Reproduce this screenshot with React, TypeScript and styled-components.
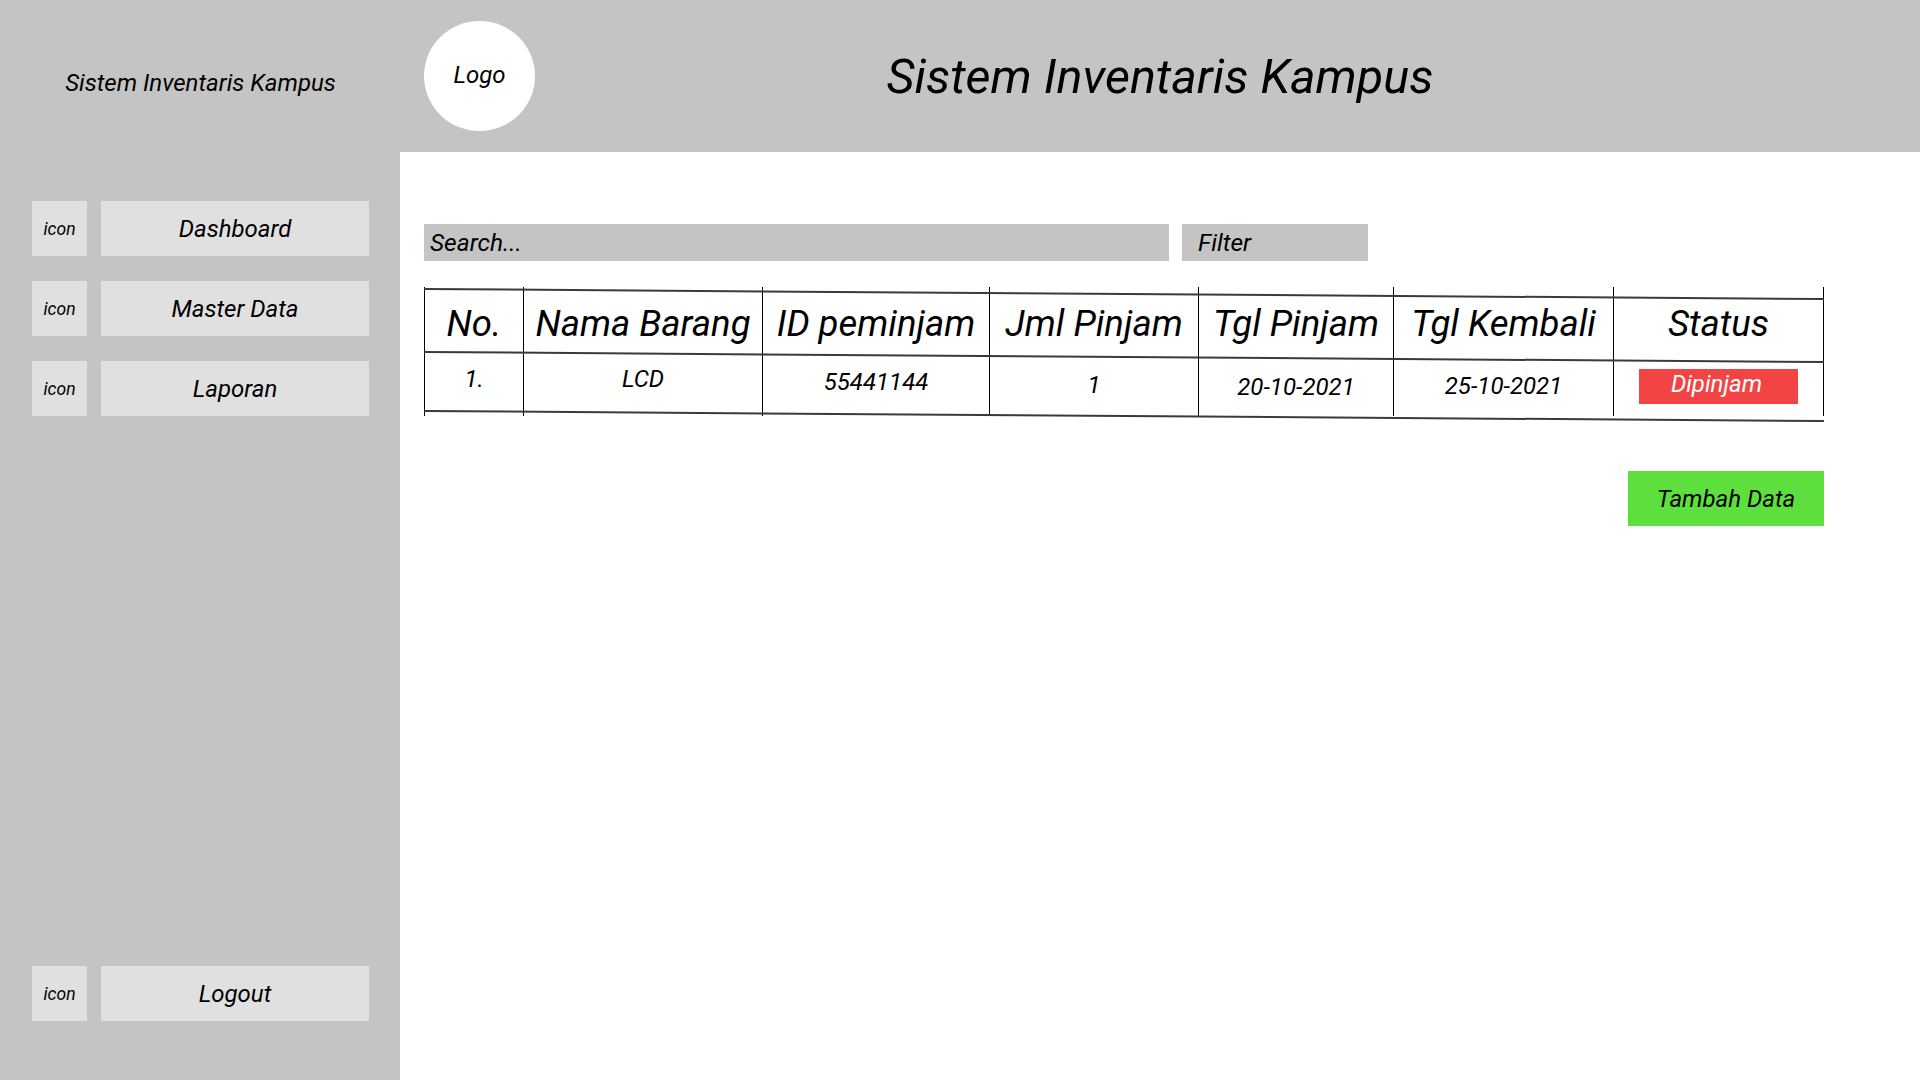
import React from "react";
import styled, { createGlobalStyle } from "styled-components";

const GlobalStyle = createGlobalStyle`
  html, body { margin: 0; padding: 0; }
  body {
    font-family: Roboto, "Liberation Sans", Arial, sans-serif;
    color: #000;
    background: #fff;
  }
  * { box-sizing: border-box; }
`;

const Page = styled.div`
  width: 1920px;
  height: 1080px;
  display: grid;
  grid-template-columns: 400px 1fr;
  grid-template-rows: 152px 1fr;
  overflow: hidden;
`;

const Sidebar = styled.aside`
  grid-row: 1 / span 2;
  grid-column: 1;
  background: #c4c4c4;
  display: flex;
  flex-direction: column;
  padding: 0 31px 59px 32px;
`;

const SideTitle = styled.div`
  height: 152px;
  display: flex;
  align-items: center;
  justify-content: center;
  padding-top: 14px;
  font-size: 24px;
  font-style: italic;
`;

const Nav = styled.nav`
  display: flex;
  flex-direction: column;
  gap: 25px;
  margin-top: 49px;
`;

const Spacer = styled.div`
  flex: 1;
`;

const NavRow = styled.div`
  display: flex;
  gap: 14px;
  height: 55px;
`;

const IconBox = styled.div`
  width: 55px;
  height: 55px;
  background: #e0e0e0;
  display: flex;
  align-items: center;
  justify-content: center;
  font-size: 17.5px;
  font-style: italic;
`;

const NavLabel = styled.div`
  flex: 1;
  background: #e0e0e0;
  display: flex;
  align-items: center;
  justify-content: center;
  font-size: 24px;
  font-style: italic;
`;

const Header = styled.header`
  grid-row: 1;
  grid-column: 2;
  background: #c4c4c4;
  display: grid;
  grid-template-columns: 1fr auto 1fr;
  align-items: center;
  padding: 0 24px;
`;

const Logo = styled.div`
  justify-self: start;
  width: 111px;
  height: 110px;
  border-radius: 50%;
  background: #fff;
  display: flex;
  align-items: center;
  justify-content: center;
  padding-bottom: 2px;
  font-size: 24px;
  font-style: italic;
`;

const Title = styled.h1`
  margin: 0;
  font-weight: 400;
  font-style: italic;
  font-size: 48.5px;
`;

const Main = styled.main`
  grid-row: 2;
  grid-column: 2;
  background: #fff;
  padding: 72px 0 0 24px;
`;

const Toolbar = styled.div`
  display: flex;
  gap: 13px;
`;

const Field = styled.div<{ $w: number; $pad: number }>`
  width: ${(p) => p.$w}px;
  height: 37px;
  background: #c4c4c4;
  display: flex;
  align-items: center;
  padding-left: ${(p) => p.$pad}px;
  font-size: 24.5px;
  font-style: italic;
`;

const TableWrap = styled.div`
  position: relative;
  margin-top: 26px;
  width: 1400px;
  display: grid;
  grid-template-columns: 99px 239px 227px 209px 195px 220px 211px;
  grid-template-rows: 64px 65px;
`;

const HeadCell = styled.div<{ $last?: boolean }>`
  border-left: 1px solid #000;
  border-right: ${(p) => (p.$last ? "1px solid #000" : "none")};
  display: flex;
  align-items: center;
  justify-content: center;
  padding-top: 8px;
  font-size: 36.5px;
  font-style: italic;
  white-space: nowrap;
`;

const DataCell = styled.div<{ $last?: boolean; $drop: number }>`
  border-left: 1px solid #000;
  border-right: ${(p) => (p.$last ? "1px solid #000" : "none")};
  display: flex;
  align-items: center;
  justify-content: center;
  padding-bottom: 10px;
  padding-top: ${(p) => p.$drop * 2}px;
  font-size: 24px;
  font-style: italic;
`;

const Rule = styled.div<{ $top: number }>`
  position: absolute;
  left: 0;
  top: ${(p) => p.$top}px;
  width: 1400px;
  height: 2px;
  background: #3a3a3a;
  transform-origin: 0 0;
  transform: rotate(0.41deg);
`;

const Badge = styled.div`
  width: 159px;
  height: 35px;
  background: #f24444;
  color: #fff;
  display: flex;
  align-items: flex-start;
  justify-content: center;
  padding-top: 1px;
  padding-right: 4px;
  font-size: 24px;
  font-style: italic;
`;

const Actions = styled.div`
  width: 1400px;
  display: flex;
  justify-content: flex-end;
  margin-top: 55px;
`;

const AddButton = styled.button`
  width: 196px;
  height: 55px;
  border: none;
  background: #5ddf3e;
  font-family: inherit;
  font-size: 24px;
  font-style: italic;
  color: #000;
  padding: 0;
`;

const headers = [
  "No.",
  "Nama Barang",
  "ID peminjam",
  "Jml Pinjam",
  "Tgl Pinjam",
  "Tgl Kembali",
  "Status",
];

const row = ["1.", "LCD", "55441144", "1", "20-10-2021", "25-10-2021"];
const drops = [0, 0, 3.5, 6, 8.5, 7.5, 7.5];

const navItems = ["Dashboard", "Master Data", "Laporan"];

export default function App() {
  return (
    <>
      <GlobalStyle />
      <Page>
        <Sidebar>
          <SideTitle>Sistem Inventaris Kampus</SideTitle>
          <Nav>
            {navItems.map((n) => (
              <NavRow key={n}>
                <IconBox>icon</IconBox>
                <NavLabel>{n}</NavLabel>
              </NavRow>
            ))}
          </Nav>
          <Spacer />
          <NavRow>
            <IconBox>icon</IconBox>
            <NavLabel>Logout</NavLabel>
          </NavRow>
        </Sidebar>
        <Header>
          <Logo>Logo</Logo>
          <Title>Sistem Inventaris Kampus</Title>
          <div />
        </Header>
        <Main>
          <Toolbar>
            <Field $w={745} $pad={6}>
              Search...
            </Field>
            <Field $w={186} $pad={16}>
              Filter
            </Field>
          </Toolbar>
          <TableWrap>
            {headers.map((h, i) => (
              <HeadCell key={h} $last={i === headers.length - 1}>
                {h}
              </HeadCell>
            ))}
            {row.map((c, i) => (
              <DataCell key={i} $drop={drops[i]}>
                {c}
              </DataCell>
            ))}
            <DataCell $last $drop={drops[6]}>
              <Badge>Dipinjam</Badge>
            </DataCell>
            <Rule $top={1} />
            <Rule $top={64} />
            <Rule $top={123} />
          </TableWrap>
          <Actions>
            <AddButton>Tambah Data</AddButton>
          </Actions>
        </Main>
      </Page>
    </>
  );
}
